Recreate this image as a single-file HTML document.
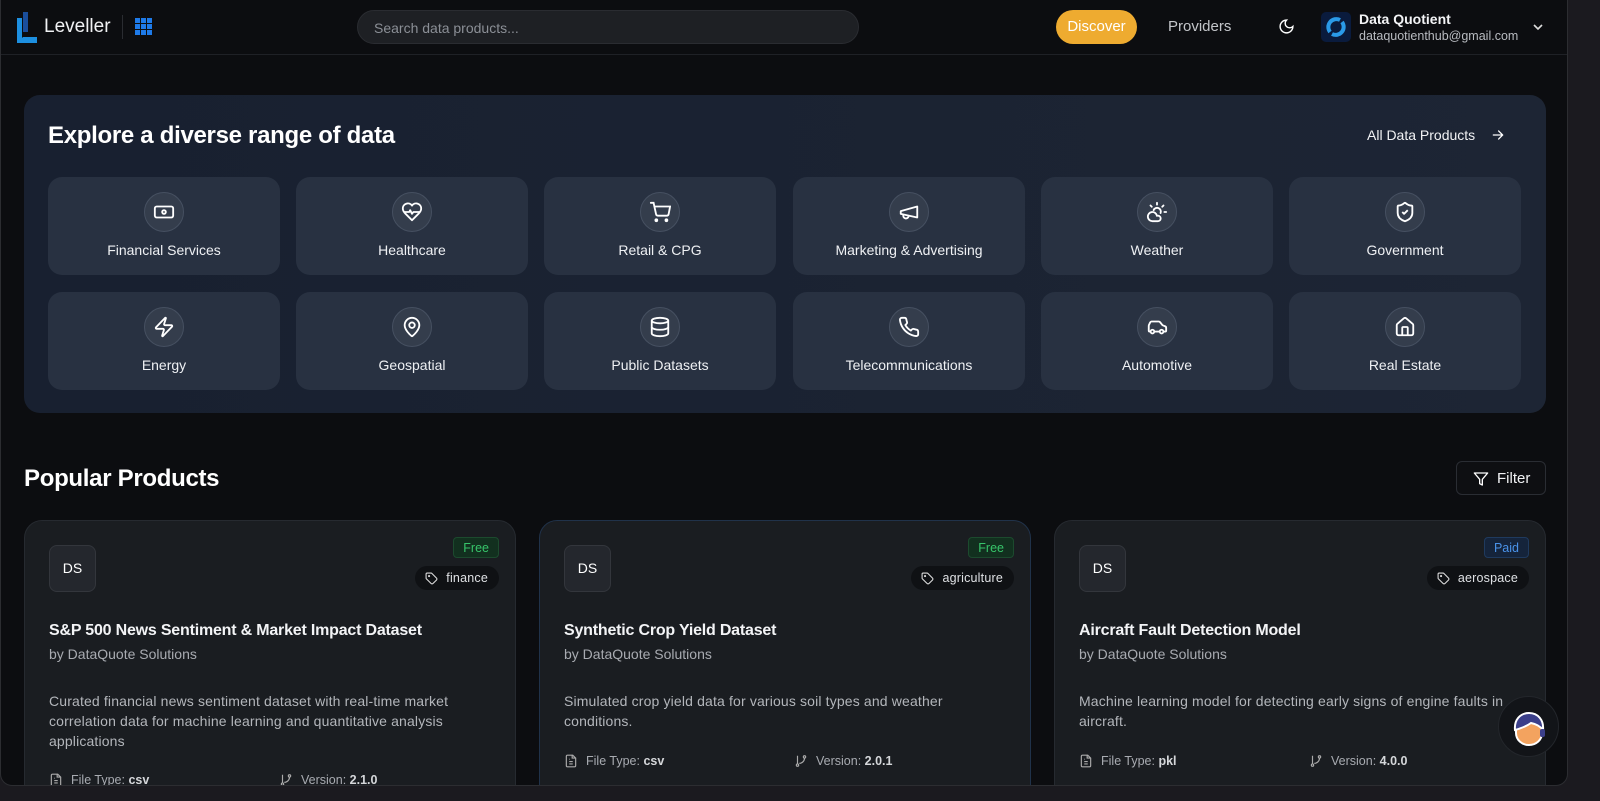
<!DOCTYPE html>
<html><head><meta charset="utf-8"><style>
*{box-sizing:border-box;margin:0;padding:0}
body{width:1600px;height:801px;background:#1b1a1f;font-family:"Liberation Sans",sans-serif;color:#e8eaed;overflow:hidden;position:relative}
.frame{position:absolute;left:0;top:0;width:1568px;height:786px;background:#0c0d10;border:1px solid #2c2d31;border-top:none;border-radius:0 0 12px 12px;overflow:hidden}
.hdr{position:absolute;left:0;top:0;width:100%;height:55px;border-bottom:1px solid #1f2126}
.abs{position:absolute}
.search{left:356px;top:10px;width:502px;height:34px;border-radius:17px;background:#1e2024;border:1px solid #2a2c31;color:#8b8f96;font-size:14px;padding:9px 16px}
.disc{left:1055px;top:10px;width:81px;height:34px;border-radius:17px;background:#eeab30;color:#fff;font-size:15px;text-align:center;line-height:34px}
.panel{left:23px;top:95px;width:1522px;height:318px;border-radius:16px;background:linear-gradient(90deg,#182030,#1d2534)}
.tile{position:absolute;width:232px;height:98px;border-radius:14px;background:#283141;text-align:center}
.tile .ic{position:absolute;left:96px;top:15px;width:40px;height:40px;border-radius:50%;background:#343d4c;border:1px solid #465061;display:flex;align-items:center;justify-content:center}
.tile .lb{position:absolute;left:0;right:0;top:65px;font-size:14px;color:#eef0f3}
.card{position:absolute;top:520px;width:492px;height:300px;border-radius:18px;background:#1a1d21;border:1px solid #262a30}
.ds{position:absolute;left:24px;top:24px;width:47px;height:47px;border-radius:8px;background:#24272d;border:1px solid #33363c;font-size:14px;text-align:center;line-height:45px;color:#fff}
.badge{position:absolute;right:16px;top:16px;height:21px;padding:0 9px;border-radius:4px;font-size:12.5px;line-height:20px}
.free{background:#12301f;border:1px solid #1c4a2e;color:#37c46a}
.paid{background:#15243b;border:1px solid #1f3a5e;color:#4a92e8}
.tag{position:absolute;right:16px;top:45px;height:24px;padding:0 11px 0 31px;border-radius:12px;background:#0f1114;font-size:12.5px;line-height:24px;color:#dfe1e4;letter-spacing:.2px}
.tag svg{position:absolute;left:10px;top:6px}
.ct{position:absolute;left:24px;top:101px;font-size:16px;font-weight:bold;color:#f3f4f6;letter-spacing:-0.2px}
.by{position:absolute;left:24px;top:125px;font-size:14px;color:#a8abb1}
.desc{position:absolute;left:24px;top:170px;width:440px;font-size:14px;line-height:20px;color:#b3b6bb;letter-spacing:.15px}
.ft{position:absolute;font-size:12.5px;color:#a8abb1;display:flex;align-items:center;gap:8px}
.ft b{color:#d5d7da}
</style></head><body>
<div class="frame">
<div class="hdr">
 <svg class="abs" style="left:16px;top:12px" width="20" height="31" viewBox="0 0 20 31"><rect x="6" y="0" width="5" height="20" fill="#1a4e9c"/><rect x="0" y="6" width="5" height="25" fill="#1d8fe0"/><path d="M0 31 L6 25 H20 V31Z" fill="#1d8fe0"/></svg>
 <div class="abs" style="left:43px;top:16px;font-size:19px;color:#f1f2f4">Leveller</div>
 <div class="abs" style="left:121px;top:15px;width:1px;height:24px;background:#2a2c31"></div>
 <svg class="abs" style="left:134px;top:18px" width="17" height="17" viewBox="0 0 17 17" fill="#1e7ae8"><rect x="0" y="0" width="5" height="5"/><rect x="6" y="0" width="5" height="5"/><rect x="12" y="0" width="5" height="5"/><rect x="0" y="6" width="5" height="5"/><rect x="6" y="6" width="5" height="5"/><rect x="12" y="6" width="5" height="5"/><rect x="0" y="12" width="5" height="5"/><rect x="6" y="12" width="5" height="5"/><rect x="12" y="12" width="5" height="5"/></svg>
 <div class="abs search">Search data products...</div>
 <div class="abs disc">Discover</div>
 <div class="abs" style="left:1167px;top:18px;font-size:15px;color:#c4c6ca">Providers</div>
 <svg class="abs" style="left:1277px;top:18px" width="17" height="17" viewBox="0 0 24 24" fill="none" stroke="#fff" stroke-width="2" stroke-linecap="round"><path d="M12 3a6 6 0 0 0 9 9 9 9 0 1 1-9-9z"/></svg>
 <div class="abs" style="left:1320px;top:12px;width:30px;height:30px;border-radius:5px;background:#0a1b3d"><svg width="30" height="30" viewBox="0 0 30 30" fill="none" stroke="#2a9ae8" stroke-width="4"><path d="M9 20 A8 8 0 0 1 19 8"/><path d="M21 10 A8 8 0 0 1 11 22"/></svg></div>
 <div class="abs" style="left:1358px;top:11px;font-size:14px;font-weight:bold;color:#f3f4f6">Data Quotient</div>
 <div class="abs" style="left:1358px;top:29px;font-size:12.5px;color:#b8bbc0">dataquotienthub@gmail.com</div>
 <svg class="abs" style="left:1531px;top:22px" width="12" height="10" viewBox="0 0 12 10" fill="none" stroke="#ddd" stroke-width="1.6"><path d="M2 3l4 4 4-4"/></svg>
</div>

<div class="abs panel">
 <div class="abs" style="left:24px;top:27px;font-size:24px;font-weight:bold;color:#fff;letter-spacing:-0.3px">Explore a diverse range of data</div>
 <div class="abs" style="left:1343px;top:32px;font-size:14px;color:#f1f2f4">All Data Products</div>
 <svg class="abs" style="left:1467px;top:33px" width="14" height="14" viewBox="0 0 24 24" fill="none" stroke="#fff" stroke-width="2.2" stroke-linecap="round"><path d="M4 12h16M13 5l7 7-7 7"/></svg>
</div>

<div class="tile" style="left:47px;top:177px"><div class="ic"><svg width="22" height="22" viewBox="0 0 24 24" fill="none" stroke="#fff" stroke-width="2"><rect x="2" y="6" width="20" height="12" rx="2"/><circle cx="12" cy="12" r="2"/><path d="M6 12h.01M18 12h.01"/></svg></div><div class="lb">Financial Services</div></div>
<div class="tile" style="left:295px;top:177px"><div class="ic"><svg width="22" height="22" viewBox="0 0 24 24" fill="none" stroke="#fff" stroke-width="2" stroke-linejoin="round"><path d="M19 14c1.5-1.5 3-3.2 3-5.5A5.5 5.5 0 0 0 12 5 5.5 5.5 0 0 0 2 8.5c0 2.3 1.5 4 3 5.5l7 7z"/><path d="M3.2 12H9l1-2 2 4 1.5-2h7.3"/></svg></div><div class="lb">Healthcare</div></div>
<div class="tile" style="left:543px;top:177px"><div class="ic"><svg width="22" height="22" viewBox="0 0 24 24" fill="none" stroke="#fff" stroke-width="2" stroke-linecap="round"><circle cx="8" cy="21" r="1"/><circle cx="19" cy="21" r="1"/><path d="M2 2h3l2.7 12.4a2 2 0 0 0 2 1.6h9.7a2 2 0 0 0 2-1.6L23 6H6"/></svg></div><div class="lb">Retail &amp; CPG</div></div>
<div class="tile" style="left:792px;top:177px"><div class="ic"><svg width="22" height="22" viewBox="0 0 24 24" fill="none" stroke="#fff" stroke-width="2" stroke-linejoin="round"><path d="M3 11l18-5v12L3 14z"/><path d="M11.6 16.8a3 3 0 1 1-5.8-1.6"/></svg></div><div class="lb">Marketing &amp; Advertising</div></div>
<div class="tile" style="left:1040px;top:177px"><div class="ic"><svg width="22" height="22" viewBox="0 0 24 24" fill="none" stroke="#fff" stroke-width="2" stroke-linecap="round"><path d="M12 2v2M4.9 4.9l1.4 1.4M20 12h2M19.1 4.9l-1.4 1.4M15.9 13.1A4 4 0 0 0 8.3 10"/><path d="M13 22H7a5 5 0 1 1 4.9-6H13a3 3 0 0 1 0 6z"/></svg></div><div class="lb">Weather</div></div>
<div class="tile" style="left:1288px;top:177px"><div class="ic"><svg width="22" height="22" viewBox="0 0 24 24" fill="none" stroke="#fff" stroke-width="2" stroke-linejoin="round"><path d="M20 13c0 5-3.5 7.5-7.7 9a1 1 0 0 1-.7 0C7.5 20.5 4 18 4 13V6a1 1 0 0 1 1-1c2 0 4.5-1.2 6.2-2.7a1.2 1.2 0 0 1 1.5 0C14.5 3.8 17 5 19 5a1 1 0 0 1 1 1z"/><path d="M9 12l2 2 4-4"/></svg></div><div class="lb">Government</div></div>
<div class="tile" style="left:47px;top:292px"><div class="ic"><svg width="22" height="22" viewBox="0 0 24 24" fill="none" stroke="#fff" stroke-width="2" stroke-linejoin="round"><path d="M4 14a1 1 0 0 1-.8-1.6l9.9-10.2a.5.5 0 0 1 .9.5l-1.9 6A1 1 0 0 0 13 10h7a1 1 0 0 1 .8 1.6l-9.9 10.2a.5.5 0 0 1-.9-.5l1.9-6A1 1 0 0 0 11 14z"/></svg></div><div class="lb">Energy</div></div>
<div class="tile" style="left:295px;top:292px"><div class="ic"><svg width="22" height="22" viewBox="0 0 24 24" fill="none" stroke="#fff" stroke-width="2"><path d="M20 10c0 5-5.5 10.2-7.4 11.8a1 1 0 0 1-1.2 0C9.5 20.2 4 15 4 10a8 8 0 0 1 16 0"/><circle cx="12" cy="10" r="3"/></svg></div><div class="lb">Geospatial</div></div>
<div class="tile" style="left:543px;top:292px"><div class="ic"><svg width="22" height="22" viewBox="0 0 24 24" fill="none" stroke="#fff" stroke-width="2"><ellipse cx="12" cy="5" rx="9" ry="3"/><path d="M3 5v14a9 3 0 0 0 18 0V5"/><path d="M3 12a9 3 0 0 0 18 0"/></svg></div><div class="lb">Public Datasets</div></div>
<div class="tile" style="left:792px;top:292px"><div class="ic"><svg width="22" height="22" viewBox="0 0 24 24" fill="none" stroke="#fff" stroke-width="2" stroke-linejoin="round"><path d="M22 16.9v3a2 2 0 0 1-2.2 2 19.8 19.8 0 0 1-8.6-3.1 19.5 19.5 0 0 1-6-6A19.8 19.8 0 0 1 2.1 4.2 2 2 0 0 1 4.1 2h3a2 2 0 0 1 2 1.7c.1 1 .4 1.900.7 2.8a2 2 0 0 1-.5 2.1L8 9.9a16 16 0 0 0 6 6l1.3-1.3a2 2 0 0 1 2.1-.4c.9.3 1.8.6 2.8.7a2 2 0 0 1 1.7 2z"/></svg></div><div class="lb">Telecommunications</div></div>
<div class="tile" style="left:1040px;top:292px"><div class="ic"><svg width="22" height="22" viewBox="0 0 24 24" fill="none" stroke="#fff" stroke-width="2" stroke-linejoin="round"><path d="M19 17h2c.6 0 1-.4 1-1v-3c0-.9-.7-1.7-1.5-1.9L18 10l-2.7-3.3A2 2 0 0 0 13.7 6H6c-.6 0-1.1.4-1.4.9l-1.4 2.9A3.7 3.7 0 0 0 3 11v5c0 .6.4 1 1 1h1"/><circle cx="7" cy="17" r="2"/><path d="M9 17h6"/><circle cx="17" cy="17" r="2"/></svg></div><div class="lb">Automotive</div></div>
<div class="tile" style="left:1288px;top:292px"><div class="ic"><svg width="22" height="22" viewBox="0 0 24 24" fill="none" stroke="#fff" stroke-width="2" stroke-linejoin="round"><path d="M15 21v-8a1 1 0 0 0-1-1h-4a1 1 0 0 0-1 1v8"/><path d="M3 10a2 2 0 0 1 .7-1.5l7-6a2 2 0 0 1 2.6 0l7 6A2 2 0 0 1 21 10v9a2 2 0 0 1-2 2H5a2 2 0 0 1-2-2z"/></svg></div><div class="lb">Real Estate</div></div>

<div class="abs" style="left:23px;top:465px;font-size:24px;font-weight:bold;color:#fff;letter-spacing:-0.3px">Popular Products</div>
<div class="abs" style="left:1455px;top:461px;width:90px;height:34px;border:1px solid #2a2d33;border-radius:6px;background:#0e0f12"><svg class="abs" style="left:16px;top:9px" width="16" height="16" viewBox="0 0 24 24" fill="none" stroke="#fff" stroke-width="2" stroke-linejoin="round"><path d="M22 3H2l8 9.5V19l4 2v-8.5z"/></svg><div class="abs" style="left:40px;top:8px;font-size:15px;color:#f1f2f4">Filter</div></div>

<div class="card" style="left:23px"><div class="ds">DS</div><div class="badge free">Free</div><div class="tag"><svg width="13" height="13" viewBox="0 0 24 24" fill="none" stroke="#ddd" stroke-width="2"><path d="M12.6 2.6A2 2 0 0 0 11.2 2H4a2 2 0 0 0-2 2v7.2a2 2 0 0 0 .6 1.4l8.7 8.7a2.4 2.4 0 0 0 3.4 0l6.6-6.6a2.4 2.4 0 0 0 0-3.4z"/><circle cx="7.5" cy="7.5" r="1"/></svg>finance</div>
<div class="ct">S&amp;P 500 News Sentiment &amp; Market Impact Dataset</div><div class="by">by DataQuote Solutions</div>
<div class="desc">Curated financial news sentiment dataset with real-time market correlation data for machine learning and quantitative analysis applications</div>
<div class="ft" style="left:24px;top:251px"><svg width="14" height="16" viewBox="0 0 24 24" fill="none" stroke="#aaa" stroke-width="2"><path d="M15 2H6a2 2 0 0 0-2 2v16a2 2 0 0 0 2 2h12a2 2 0 0 0 2-2V7z"/><path d="M14 2v5h5M9 13h6M9 17h6M9 9h1"/></svg><span>File Type: <b>csv</b></span></div><div class="ft" style="left:254px;top:251px"><svg width="14" height="16" viewBox="0 0 24 24" fill="none" stroke="#aaa" stroke-width="2"><circle cx="6" cy="19" r="2"/><circle cx="18" cy="5" r="2"/><path d="M6 3v14M18 7a9 9 0 0 1-9 9"/></svg><span>Version: <b>2.1.0</b></span></div></div>

<div class="card" style="left:538px;border-color:#20324a"><div class="ds">DS</div><div class="badge free">Free</div><div class="tag"><svg width="13" height="13" viewBox="0 0 24 24" fill="none" stroke="#ddd" stroke-width="2"><path d="M12.6 2.6A2 2 0 0 0 11.2 2H4a2 2 0 0 0-2 2v7.2a2 2 0 0 0 .6 1.4l8.7 8.7a2.4 2.4 0 0 0 3.4 0l6.6-6.6a2.4 2.4 0 0 0 0-3.4z"/><circle cx="7.5" cy="7.5" r="1"/></svg>agriculture</div>
<div class="ct">Synthetic Crop Yield Dataset</div><div class="by">by DataQuote Solutions</div>
<div class="desc" style="width:400px">Simulated crop yield data for various soil types and weather conditions.</div>
<div class="ft" style="left:24px;top:232px"><svg width="14" height="16" viewBox="0 0 24 24" fill="none" stroke="#aaa" stroke-width="2"><path d="M15 2H6a2 2 0 0 0-2 2v16a2 2 0 0 0 2 2h12a2 2 0 0 0 2-2V7z"/><path d="M14 2v5h5M9 13h6M9 17h6M9 9h1"/></svg><span>File Type: <b>csv</b></span></div><div class="ft" style="left:254px;top:232px"><svg width="14" height="16" viewBox="0 0 24 24" fill="none" stroke="#aaa" stroke-width="2"><circle cx="6" cy="19" r="2"/><circle cx="18" cy="5" r="2"/><path d="M6 3v14M18 7a9 9 0 0 1-9 9"/></svg><span>Version: <b>2.0.1</b></span></div></div>

<div class="card" style="left:1053px"><div class="ds">DS</div><div class="badge paid">Paid</div><div class="tag"><svg width="13" height="13" viewBox="0 0 24 24" fill="none" stroke="#ddd" stroke-width="2"><path d="M12.6 2.6A2 2 0 0 0 11.2 2H4a2 2 0 0 0-2 2v7.2a2 2 0 0 0 .6 1.4l8.7 8.7a2.4 2.4 0 0 0 3.4 0l6.6-6.6a2.4 2.4 0 0 0 0-3.4z"/><circle cx="7.5" cy="7.5" r="1"/></svg>aerospace</div>
<div class="ct">Aircraft Fault Detection Model</div><div class="by">by DataQuote Solutions</div>
<div class="desc" style="width:440px">Machine learning model for detecting early signs of engine faults in aircraft.</div>
<div class="ft" style="left:24px;top:232px"><svg width="14" height="16" viewBox="0 0 24 24" fill="none" stroke="#aaa" stroke-width="2"><path d="M15 2H6a2 2 0 0 0-2 2v16a2 2 0 0 0 2 2h12a2 2 0 0 0 2-2V7z"/><path d="M14 2v5h5M9 13h6M9 17h6M9 9h1"/></svg><span>File Type: <b>pkl</b></span></div><div class="ft" style="left:254px;top:232px"><svg width="14" height="16" viewBox="0 0 24 24" fill="none" stroke="#aaa" stroke-width="2"><circle cx="6" cy="19" r="2"/><circle cx="18" cy="5" r="2"/><path d="M6 3v14M18 7a9 9 0 0 1-9 9"/></svg><span>Version: <b>4.0.0</b></span></div></div>

<div class="abs" style="left:1497px;top:696px;width:61px;height:61px;border-radius:50%;background:#121418;border:1px solid #23262b"><svg width="61" height="61" viewBox="0 0 61 61"><path d="M17 32c0-8 6-13 13-13s13 5 13 13v4c0 7-6 12-13 12s-13-5-13-12z" fill="#f3a35f" stroke="#fff" stroke-width="2"/><path d="M16 33c-1-10 5-17 14-17s15 7 14 17c-3-4-7-6-12-7-4 3-9 5-16 7z" fill="#3b3f8a" stroke="#fff" stroke-width="2"/><rect x="41" y="32" width="5" height="8" rx="2" fill="#3b3f8a"/></svg></div>
</div>
</body></html>
